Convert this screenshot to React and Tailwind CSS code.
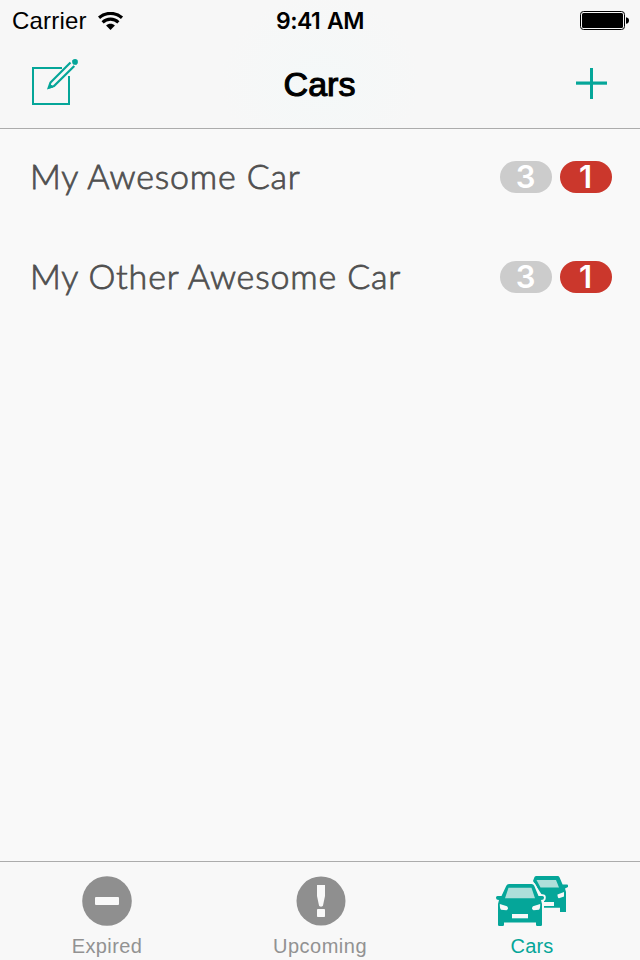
import React from 'react';

const cars = [
    { name: 'My Awesome Car', upcoming: 3, expired: 1 },
    { name: 'My Other Awesome Car', upcoming: 3, expired: 1 },
];

const WifiIcon = () => (
    <svg width="26" height="18" viewBox="0 0 26 18" fill="none" stroke="#000">
        <path d="M1 5.700a17.500 17.500 0 0 1 23 0" strokeWidth="3.2" />
        <path d="M4.600 10.300a11.500 11.500 0 0 1 15.800 0" strokeWidth="3.100" />
        <path d="M12.500 18l-4.400-4.500c2.200-2.300 6.600-2.300 8.800 0z" fill="#000" stroke="none" />
    </svg>
);

const BatteryIcon = () => (
    <svg width="50" height="20" viewBox="0 0 50 20">
        <rect x="0.5" y="0.5" width="44" height="18" rx="3" fill="none" stroke="#000" />
        <rect x="2" y="2" width="41" height="15" rx="1.5" fill="#000" />
        <path d="M46 6.2c2 .3 3 1.500 3 3.300s-1 3-3 3.300z" fill="#000" />
    </svg>
);

const EditIcon = () => (
    <svg width="48" height="48" viewBox="0 0 48 48" fill="none" stroke="#05a699">
        <path d="M31 10H2v36h36V18" strokeWidth="2" />
        <path d="M39.500 4.500L19.500 24.500l-1.800 5.300 5.300-1.800L43.300 8" strokeWidth="2.200" />
        <path d="M17.500 30.200l1.500-4 3 2.800z" fill="#05a699" strokeWidth="1" />
        <path d="M43 4.900l1-1" strokeWidth="5.400" />
        <path d="M44 3.900h.1" strokeWidth="5.600" strokeLinecap="round" />
    </svg>
);

const PlusIcon = () => (
    <svg width="32" height="32" viewBox="0 0 32 32" fill="#05a699">
        <rect x="0" y="13.500" width="31" height="3.200" />
        <rect x="14" y="0" width="3" height="31" />
    </svg>
);

const ExpiredIcon = () => (
    <svg width="50" height="50" viewBox="0 0 50 50">
        <circle cx="25" cy="25" r="24.800" fill="#8f8f8f" />
        <rect x="13" y="21" width="24" height="8" rx="1" fill="#f9f9f9" />
    </svg>
);

const UpcomingIcon = () => (
    <svg className="relative left-px" width="50" height="50" viewBox="0 0 50 50">
        <circle cx="25" cy="25" r="24.500" fill="#8f8f8f" />
        <path d="M21 9h8v11l-2 9.500c-.3 1.500-3.700 1.500-4 0L21 20z" fill="#f9f9f9" />
        <rect x="21" y="33" width="8" height="8" rx="0.800" fill="#f9f9f9" />
    </svg>
);

const CarsIcon = () => (
    <svg width="72" height="50" viewBox="0 0 72 50">
        {/* back car */}
        <path d="M37 5L38.500 1Q39 0 40.500 0H61.500Q63 0 63.600 1.400L66.600 8.500H71Q72 8.500 72 9.500V11L69 12.500L70 16V36H64V31.700H48V22L44 16z" fill="#05a699" />
        <path d="M40.500 4H60L63 11.500H44.500z" fill="#aedfda" />
        <path d="M61.500 18.500L68 16V20.500L63 22.300Q61.500 22 61.500 18.500z" fill="#f8f8f8" />
        <rect x="46" y="26" width="12" height="4" fill="#f8f8f8" />
        {/* front car */}
        <path
            d="M13 8H35.500Q37.500 8 38.200 9.800L42.500 20H46.500Q48 20 48 21.500Q48 24 45 24L46 28V48.800Q46 50 44.800 50H41.200Q40 50 40 48.800V46.500H8V48.800Q8 50 6.800 50H3.200Q2 50 2 48.800V28L3 24Q0 24 0 21.500Q0 20 1.500 20H5.500L10.300 9.800Q11 8 13 8z"
            fill="#05a699"
            stroke="#f8f8f8"
            strokeWidth="3.600"
            paintOrder="stroke"
        />
        <path d="M12.500 11.700H35.500L39 22.200H9z" fill="#aedfda" />
        <path d="M3.800 28L11 30.200Q12 30.700 12 33L10.500 34.200L5 33.700Q3.800 33 3.800 28z" fill="#f8f8f8" />
        <path d="M44.200 28L37 30.200Q36 30.700 36 33L37.500 34.200L43 33.700Q44.200 33 44.200 28z" fill="#f8f8f8" />
        <rect x="16" y="38" width="16" height="4.300" fill="#f8f8f8" />
    </svg>
);

const Badge = ({ color, children }) => (
    <span className={`flex h-8 w-[52px] items-center justify-center rounded-full pr-px font-['Inter',sans-serif] text-[31px] leading-8 font-semibold text-white ${color}`}>
        {children}
    </span>
);

const StatusBar = () => (
    <div className="grid h-10 grid-cols-3 items-center px-3 pt-px text-[24px] leading-none">
        <div className="flex items-center gap-[11px]">
            <span className="tracking-[0.2px]">Carrier</span>
            <WifiIcon />
        </div>
        <div className="pt-0.5 text-center font-['Inter',sans-serif] text-[23px] font-semibold tracking-[-0.5px] [word-spacing:1.5px]">9:41 AM</div>
        <div className="-mr-[2px] flex justify-end">
            <BatteryIcon />
        </div>
    </div>
);

const NavBar = () => (
    <div className="grid h-[88px] grid-cols-3 items-center">
        <div className="pb-[5px] pl-[31px]">
            <EditIcon />
        </div>
        <h1 className="pr-px text-center text-[34px] leading-none [-webkit-text-stroke:1.1px_#000]">Cars</h1>
        <div className="flex justify-end pr-8 pb-px">
            <PlusIcon />
        </div>
    </div>
);

const Tab = ({ icon, label, className }) => (
    <div className={`flex flex-col items-center pt-[14px] ${className}`}>
        {icon}
        <span className="mt-[10px] text-[20px] leading-5">{label}</span>
    </div>
);

const App = () => {
    return (
        <div className="flex h-[960px] w-[640px] flex-col overflow-hidden bg-[#f9f9f9] font-['Liberation_Sans',sans-serif] text-black">
            <header className="h-[129px] border-b border-[#acacac] bg-[#f7f7f7] bg-[radial-gradient(ellipse_100px_90px_at_50%_65%,#f4f8f8,#f7f7f7)]">
                <StatusBar />
                <NavBar />
            </header>

            <main className="flex-1">
                {cars.map((car) => (
                    <div key={car.name} className="flex h-[100px] items-start justify-between pt-8 pr-7 pl-[30px]">
                        <span className="-mt-px font-['Lato',sans-serif] text-[34px] leading-8 font-light tracking-[0.85px] text-[#505050] [-webkit-text-stroke:0.8px_#505050]">
                            {car.name}
                        </span>
                        <div className="flex gap-2">
                            <Badge color="bg-[#cccccc]">{car.upcoming}</Badge>
                            <Badge color="bg-[#cb372c]">{car.expired}</Badge>
                        </div>
                    </div>
                ))}
            </main>

            <nav className="grid h-[99px] grid-cols-[214px_212px_212px] border-t border-[#acacac] bg-[#f8f8f8]">
                <Tab icon={<ExpiredIcon />} label="Expired" className="tracking-[0.4px] text-[#929292]" />
                <Tab icon={<UpcomingIcon />} label="Upcoming" className="tracking-[0.5px] text-[#929292]" />
                <Tab icon={<CarsIcon />} label="Cars" className="tracking-[0.2px] text-[#05a699]" />
            </nav>
        </div>
    );
};

export default App;
